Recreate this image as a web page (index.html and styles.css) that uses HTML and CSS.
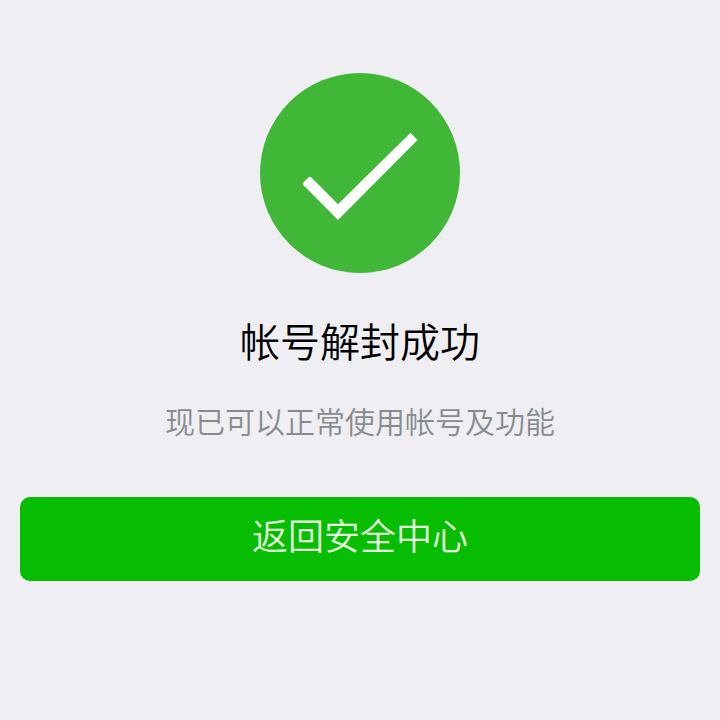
FILE: index.html
```html
<!DOCTYPE html>
<html lang="zh-CN">
<head>
<meta charset="utf-8">
<title>帐号解封成功</title>
<link rel="stylesheet" href="styles.css">
</head>
<body>
<main class="result">
  <svg class="result-icon" viewBox="0 0 200 200" aria-hidden="true">
    <circle cx="100" cy="100" r="100" fill="#40b737"/>
    <path d="M43.3 109.5L48.5 104.4Q50 103.200 51.500 104.600L78 131.300L150.500 59.700L157.500 67L78 147L43.300 112Q42.200 110.800 43.300 109.500Z" fill="#fff"/>
  </svg>
  <h1 class="result-title">帐号解封成功</h1>
  <p class="result-desc">现已可以正常使用帐号及功能</p>
  <button class="result-button" type="button">返回安全中心</button>
</main>
</body>
</html>
```
FILE: styles.css
```css
body {
  margin: 0;
  background: #eeeef3;
  font-family: "Noto Sans CJK SC", sans-serif;
}

.result {
  display: flex;
  flex-direction: column;
  align-items: center;
  box-sizing: border-box;
  min-height: 720px;
  padding: 73px 20px 0;
}

.result-icon {
  width: 200px;
  height: 200px;
}

.result-title {
  margin: 37px 0 0;
  color: #000;
  font-size: 40px;
  font-weight: 350;
  line-height: 60px;
}

.result-desc {
  margin: 28px 0 0;
  color: #888b8d;
  font-size: 30px;
  font-weight: 350;
  line-height: 44px;
}

.result-button {
  width: 100%;
  height: 84px;
  margin-top: 55px;
  padding: 0 0 11px;
  border: 0;
  border-radius: 10px;
  background: #07bd02;
  color: #e3fadf;
  font-family: inherit;
  font-size: 36px;
  font-weight: 350;
  line-height: 54px;
}
```
